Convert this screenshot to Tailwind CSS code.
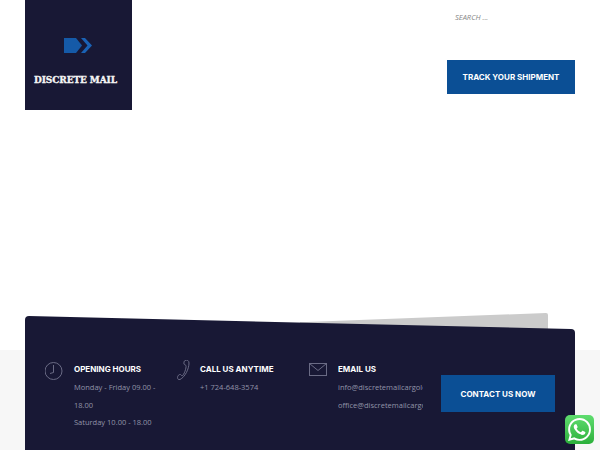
<!DOCTYPE html>
<html>
<head>
<meta charset="utf-8">
<script src="https://cdn.jsdelivr.net/npm/@tailwindcss/browser@4"></script>
</head>
<body class="font-['Open_Sans',sans-serif]">
<div class="relative h-[450px] w-[600px] overflow-hidden bg-white">
  <header class="flex h-[110px] justify-between px-[25px]">
    <div class="flex h-[110px] w-[107px] flex-col items-center bg-[#181835] pt-[38px]">
      <svg width="29" height="15" viewBox="0 0 29 15"><path d="M0 0H12L18 7.500L12 15H0Z" fill="#155aa8"/><path d="M17 0H21L28 7.500L21 15H17L23.500 7.500Z" fill="#1a62b5"/></svg>
      <div class="mt-[21px] mr-[6px] whitespace-nowrap font-['DejaVu_Serif',serif] text-[9px] leading-[12px] font-bold tracking-[-0.1px] text-[#f4f4f4] [-webkit-text-stroke:0.35px_#f4f4f4]">DISCRETE MAIL</div>
    </div>
    <div class="flex w-[128px] flex-col">
      <div class="mt-[11px] h-[12px] pl-[8px] text-[7.500px] leading-[12px] text-[#888888] italic">SEARCH ...</div>
      <a class="mt-[37px] flex h-[34px] items-center justify-center bg-[#0b4f95] font-['Inter',sans-serif] text-[8px] font-bold text-white">TRACK YOUR SHIPMENT</a>
    </div>
  </header>
  <section class="relative mt-[203px] h-[137px] px-[25px]">
    <div class="absolute inset-x-0 top-[37px] bottom-0 bg-[#f7f7f7]"></div>
    <div class="relative h-[137px]">
      <svg class="absolute inset-0" width="550" height="137" viewBox="0 0 550 137">
        <path d="M275 9.300L521 0a2 2 0 0 1 2 2V20H275Z" fill="#cbcbcb"/>
        <path d="M4 3L546 16Q550 16.100 550 20V137H0V7Q0 3 4 3Z" fill="#181835"/>
      </svg>
      <div class="relative flex pt-[50px] pl-[20px]">
        <div class="flex w-[132px]">
          <svg class="mt-[-1px] w-[29px] shrink-0" height="20" viewBox="0 0 29 20"><g fill="none" stroke="#6a6b85" stroke-width="1"><circle cx="8.500" cy="9" r="8.500"/><path d="M8.500 3V10.500L5 11.500"/></g></svg>
          <div class="w-[90px]">
            <h3 class="font-['Inter',sans-serif] text-[8px] leading-[12px] font-bold text-white">OPENING HOURS</h3>
            <p class="mt-[4px] text-[7.500px] leading-[17.500px] text-[#9294a8]">Monday - Friday 09.00 - 18.00<br>Saturday 10.00 - 18.00</p>
          </div>
        </div>
        <div class="flex w-[132px]">
          <svg class="mt-[-3px] w-[23px] shrink-0" height="20" viewBox="0 0 23 20"><path d="M8 .500C10 -.500 12 .500 12 3C12 9 8 17 3 19.500C1.500 20 .500 19 .500 17.500C.500 16 2 14 3.500 14.500C4.500 15 4.500 16 5 16C7 15 9.500 8 9 5.500C8.500 5 7.500 5 7 4C6.800 2.500 7 1 8 .500Z" fill="none" stroke="#6a6b85"/></svg>
          <div>
            <h3 class="font-['Inter',sans-serif] text-[8px] leading-[12px] font-bold text-white">CALL US ANYTIME</h3>
            <p class="mt-[4px] text-[7.500px] leading-[17.500px] text-[#9294a8]">+1 724-648-3574</p>
          </div>
        </div>
        <div class="flex w-[114px]">
          <svg class="w-[29px] shrink-0" height="14" viewBox="0 0 29 14"><g fill="none" stroke="#6a6b85"><rect x=".500" y=".500" width="17" height="12"/><path d="M.500 .500L9 7.500L17.500 .500"/></g></svg>
          <div class="w-[85px] overflow-hidden">
            <h3 class="font-['Inter',sans-serif] text-[8px] leading-[12px] font-bold text-white">EMAIL US</h3>
            <p class="mt-[4px] whitespace-nowrap text-[7.500px] leading-[17.500px] text-[#9294a8]">info@discretemailcargologistics.com<br>office@discretemailcargologistics.com</p>
          </div>
        </div>
        <a class="mt-[12px] ml-[18px] flex h-[37px] w-[114px] items-center justify-center bg-[#0b4f95] font-['Inter',sans-serif] text-[8px] font-bold text-white">CONTACT US NOW</a>
      </div>
    </div>
  </section>
  <a class="absolute top-[415px] left-[565px] flex h-[29px] w-[29px] items-center justify-center rounded-[5px] bg-linear-to-b from-[#5fdd6f] to-[#2bb03b]">
    <svg width="23" height="23" viewBox="0 0 24 24" fill="#fff"><path d="M17.472 14.382c-.297-.149-1.758-.867-2.03-.967-.273-.099-.471-.148-.67.15-.197.297-.767.966-.94 1.164-.173.199-.347.223-.644.075-.297-.15-1.255-.463-2.39-1.475-.883-.788-1.48-1.761-1.653-2.059-.173-.297-.018-.458.13-.606.134-.133.298-.347.446-.52.149-.174.198-.298.298-.497.099-.198.05-.371-.025-.52-.075-.149-.669-1.612-.916-2.207-.242-.579-.487-.5-.669-.51-.173-.008-.371-.01-.57-.01-.198 0-.52.074-.792.372-.272.297-1.04 1.016-1.04 2.479 0 1.462 1.065 2.875 1.213 3.074.149.198 2.096 3.2 5.077 4.487.709.306 1.262.489 1.694.625.712.227 1.36.195 1.871.118.571-.085 1.758-.719 2.006-1.413.248-.694.248-1.289.173-1.413-.074-.124-.272-.198-.57-.347m-5.421 7.403h-.004a9.87 9.87 0 01-5.031-1.378l-.361-.214-3.741.982.998-3.648-.235-.374a9.86 9.86 0 01-1.51-5.26c.001-5.45 4.436-9.884 9.888-9.884 2.64 0 5.122 1.03 6.988 2.898a9.825 9.825 0 012.893 6.994c-.003 5.45-4.437 9.884-9.885 9.884m8.413-18.297A11.815 11.815 0 0012.05 0C5.495 0 .16 5.335.157 11.892c0 2.096.547 4.142 1.588 5.945L.057 24l6.305-1.654a11.882 11.882 0 005.683 1.448h.005c6.554 0 11.89-5.335 11.893-11.893a11.821 11.821 0 00-3.48-8.413z"/></svg>
  </a>
</div>
</body>
</html>
